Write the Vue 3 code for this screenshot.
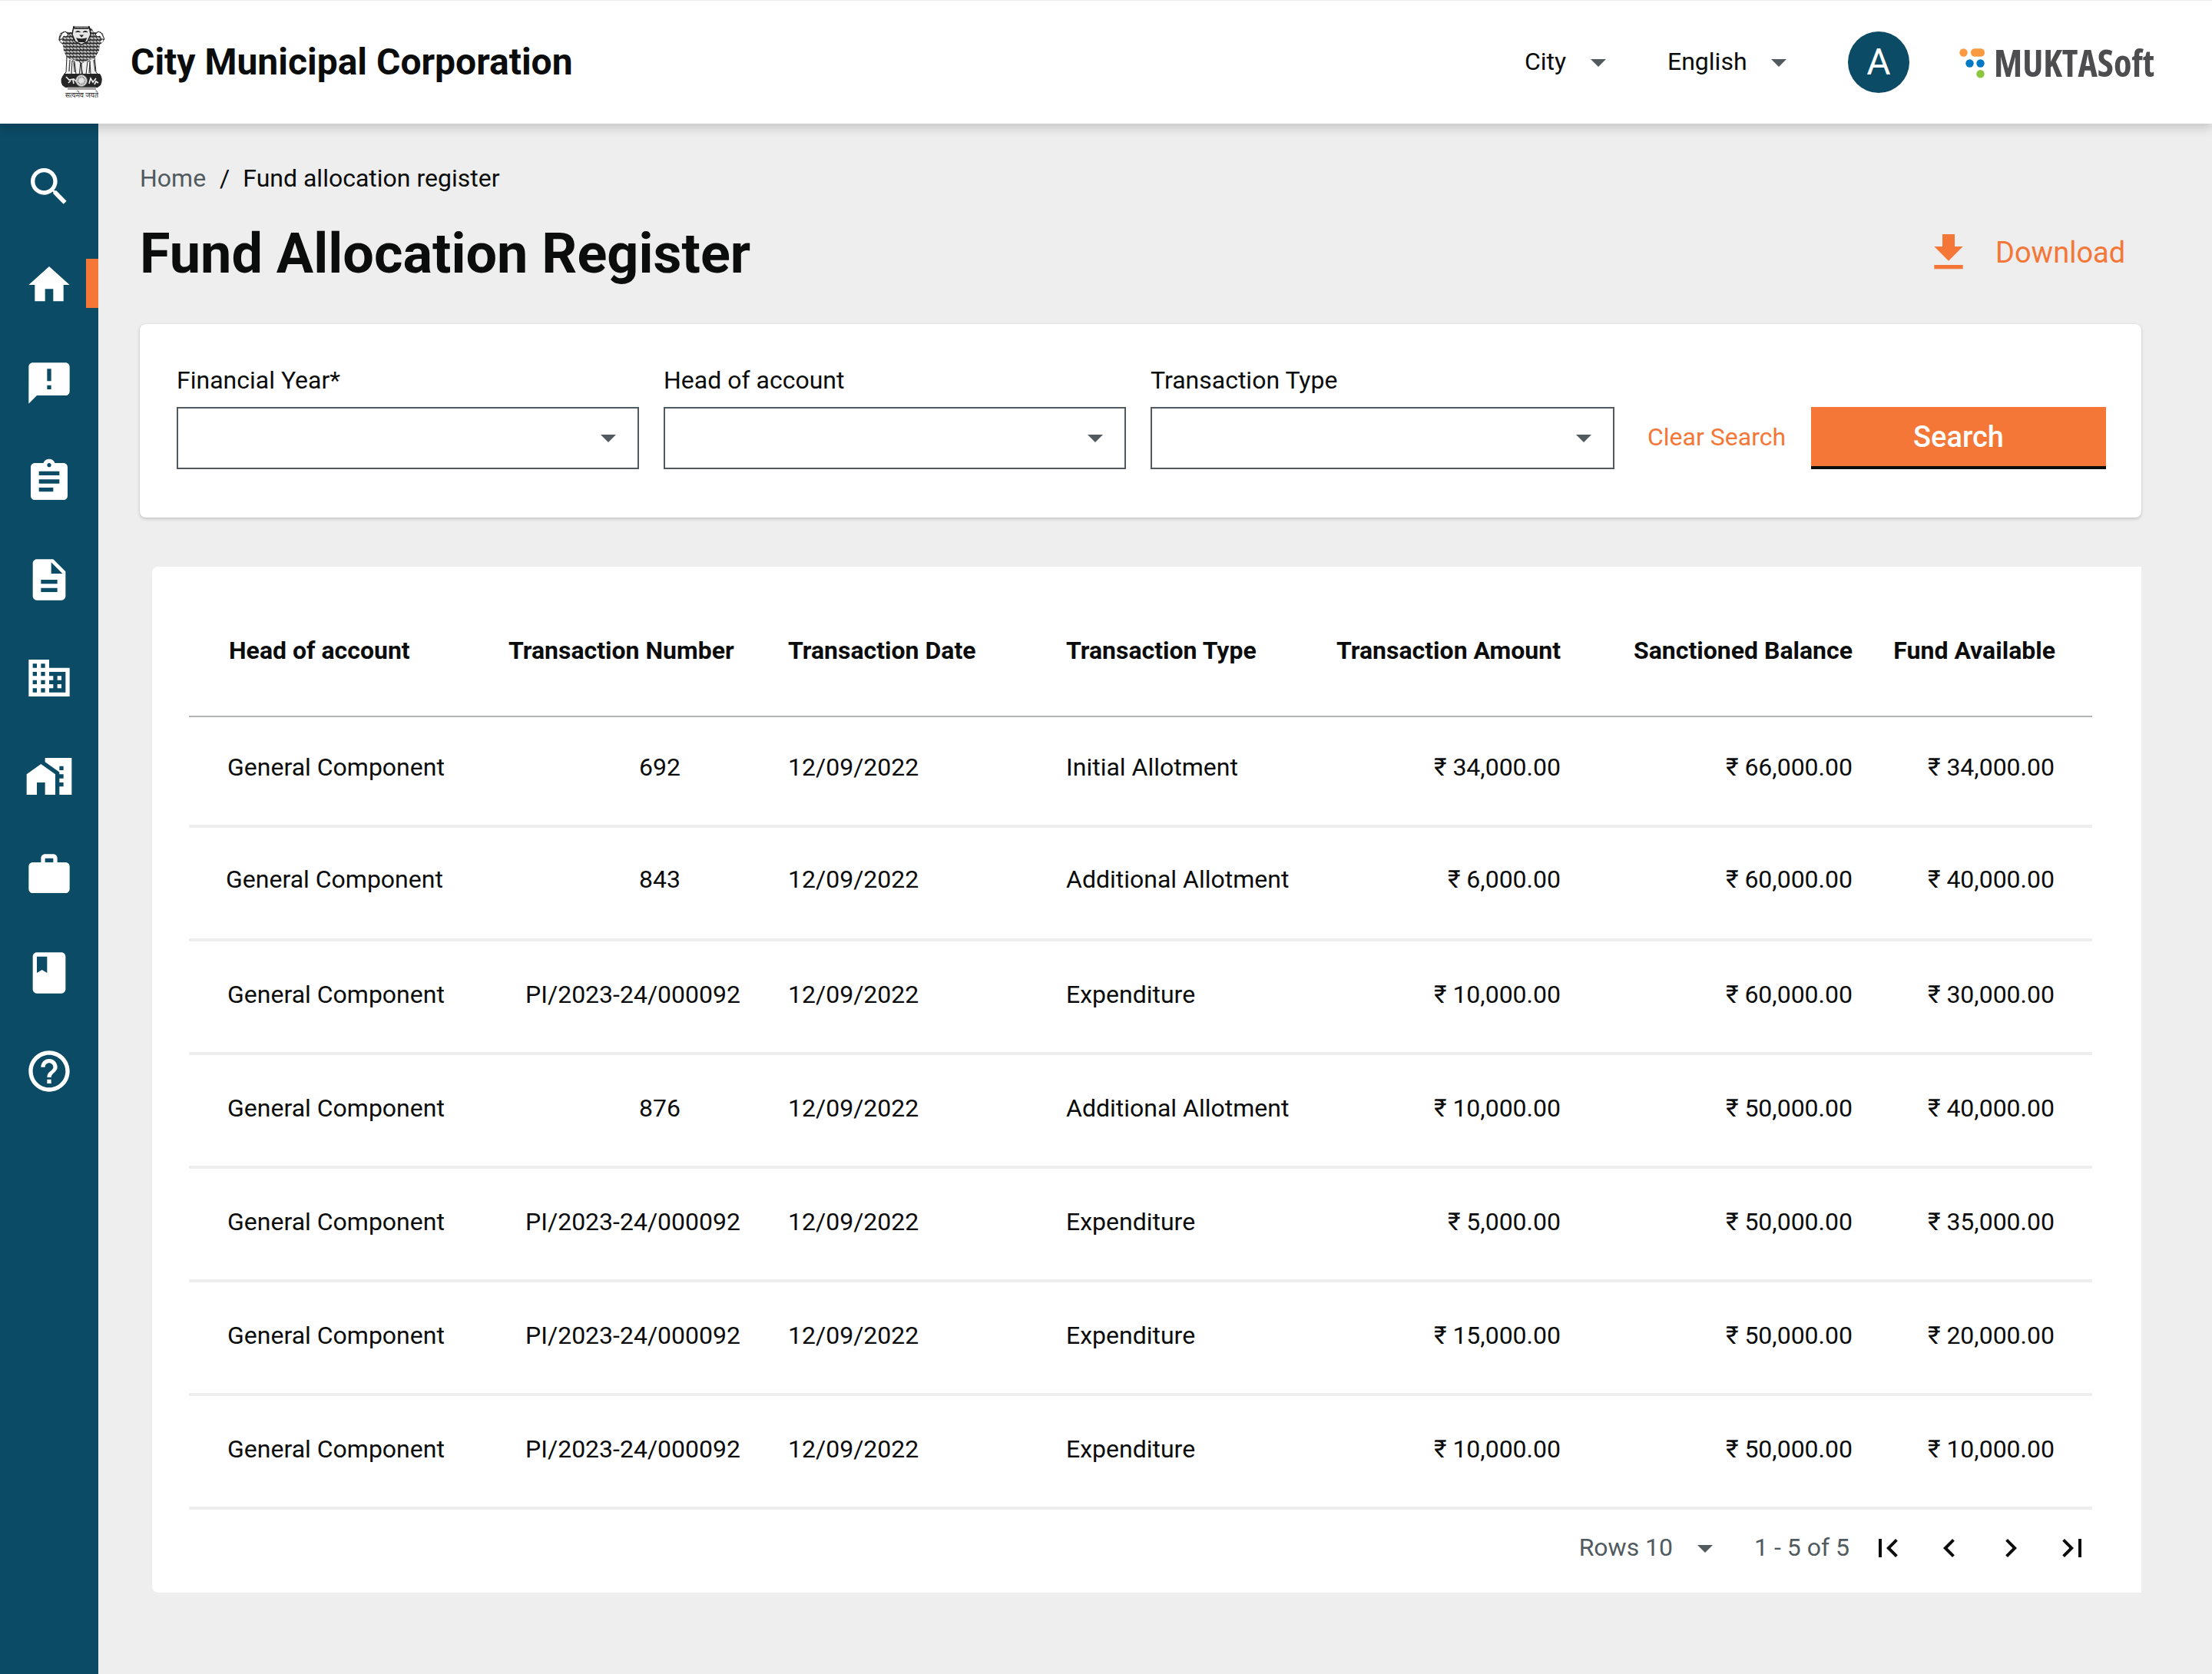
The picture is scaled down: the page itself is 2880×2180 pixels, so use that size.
<script setup>
const navItems = [
  { name: 'search', d: 'M15.5 14h-.79l-.28-.27C15.41 12.59 16 11.11 16 9.5 16 5.91 13.09 3 9.5 3S3 5.91 3 9.5 5.91 16 9.5 16c1.61 0 3.09-.59 4.23-1.57l.27.28v.79l5 4.99L20.49 19l-4.99-5zm-6 0C7.01 14 5 11.99 5 9.5S7.01 5 9.5 5 14 7.01 14 9.5 11.99 14 9.5 14z' },
  { name: 'home', active: true, d: 'M10 20v-6h4v6h5v-8h3L12 3 2 12h3v8z' },
  { name: 'complaints', d: 'M20 2H4c-1.1 0-1.99.9-1.99 2L2 22l4-4h14c1.1 0 2-.9 2-2V4c0-1.100-.9-2-2-2zm-7 13h-2v-2h2v2zm0-4h-2V5h2v6z' },
  { name: 'assignment', d: 'M19 3h-4.180C14.4 1.840 13.3 1 12 1c-1.3 0-2.4.84-2.820 2H5c-1.1 0-2 .9-2 2v14c0 1.1.9 2 2 2h14c1.1 0 2-.9 2-2V5c0-1.1-.9-2-2-2zm-7 0c.55 0 1 .45 1 1s-.45 1-1 1-1-.45-1-1 .45-1 1-1zm2 14H7v-2h7v2zm3-4H7v-2h10v2zm0-4H7V7h10v2z' },
  { name: 'document', d: 'M14 2H6c-1.100 0-1.990.9-1.990 2L4 20c0 1.1.89 2 1.990 2H18c1.100 0 2-.9 2-2V8l-6-6zm2 16H8v-2h8v2zm0-4H8v-2h8v2zm-3-5V3.500L18.500 9H13z' },
  { name: 'organisation', d: 'M12 7V3H2v18h20V7H12zM6 19H4v-2h2v2zm0-4H4v-2h2v2zm0-4H4V9h2v2zm0-4H4V5h2v2zm4 12H8v-2h2v2zm0-4H8v-2h2v2zm0-4H8V9h2v2zm0-4H8V5h2v2zm10 12h-8v-2h2v-2h-2v-2h2v-2h-2V9h8v10zm-2-8h-2v2h2v-2zm0 4h-2v2h2v-2z' },
  { name: 'property', d: 'M1 11v10h5v-6h4v6h5V11L8 6z M10 3v1.970l7 5V11h2v2h-2v2h2v2h-2v4h6V3H10zm9 6h-2V7h2v2z' },
  { name: 'works', d: 'M20 6h-4V4c0-1.110-.89-2-2-2h-4c-1.110 0-2 .89-2 2v2H4c-1.110 0-1.990.89-1.990 2L2 19c0 1.110.89 2 2 2h16c1.110 0 2-.89 2-2V8c0-1.110-.89-2-2-2zm-6 0h-4V4h4v2z' },
  { name: 'register', d: 'M18 2H6c-1.100 0-2 .9-2 2v16c0 1.100.9 2 2 2h12c1.100 0 2-.9 2-2V4c0-1.100-.9-2-2-2zM6 4h5v8l-2.500-1.500L6 12V4z' },
  { name: 'help', d: 'M11 18h2v-2h-2v2zm1-16C6.480 2 2 6.480 2 12s4.480 10 10 10 10-4.480 10-10S17.520 2 12 2zm0 18c-4.410 0-8-3.590-8-8s3.590-8 8-8 8 3.590 8 8-3.590 8-8 8zm0-14c-2.210 0-4 1.790-4 4h2c0-1.100.9-2 2-2s2 .9 2 2c0 2-3 1.750-3 5h2c0-2.250 3-2.500 3-5 0-2.210-1.790-4-4-4z' },
]

const filters = ['Financial Year*', 'Head of account', 'Transaction Type']

const columns = ['Head of account', 'Transaction Number', 'Transaction Date', 'Transaction Type', 'Transaction Amount', 'Sanctioned Balance', 'Fund Available']

const rows = [
  { no: '692', type: 'Initial Allotment', amount: '34,000.00', balance: '66,000.00', fund: '34,000.00' },
  { no: '843', type: 'Additional Allotment', amount: '6,000.00', balance: '60,000.00', fund: '40,000.00' },
  { no: 'PI/2023-24/000092', type: 'Expenditure', amount: '10,000.00', balance: '60,000.00', fund: '30,000.00' },
  { no: '876', type: 'Additional Allotment', amount: '10,000.00', balance: '50,000.00', fund: '40,000.00' },
  { no: 'PI/2023-24/000092', type: 'Expenditure', amount: '5,000.00', balance: '50,000.00', fund: '35,000.00' },
  { no: 'PI/2023-24/000092', type: 'Expenditure', amount: '15,000.00', balance: '50,000.00', fund: '20,000.00' },
  { no: 'PI/2023-24/000092', type: 'Expenditure', amount: '10,000.00', balance: '50,000.00', fund: '10,000.00' },
]

const pagers = [
  'M18.410 16.590L13.820 12l4.590-4.590L17 6l-6 6 6 6zM6 6h2v12H6z',
  'M15.410 7.410L14 6l-6 6 6 6 1.410-1.410L10.830 12z',
  'M10 6L8.590 7.410 13.170 12l-4.580 4.590L10 18l6-6z',
  'M5.590 7.410L10.180 12l-4.590 4.590L7 18l6-6-6-6zM16 6h2v12h-2z',
]
</script>

<template>
  <div class="page">
    <header class="topbar">
      <svg class="emblem" viewBox="0 0 90 120">
        <defs>
          <pattern id="fur" width="4.400" height="4.400" patternUnits="userSpaceOnUse">
            <rect width="4.400" height="4.400" fill="#1c1c1c" />
            <path d="M0 1l1.400 1.700L2.800 1M2.200 4l1-1.600L4.400 4" stroke="#f4f4f4" stroke-width=".95" fill="none" />
          </pattern>
        </defs>
        <path d="M27 52l-1 21-3 3h10l1-18 3 1 2 17h-4v2h8l2-18 3 18h8v-2h-4l2-17 3-1 1 18h10l-3-3-2-21z" fill="#efefef" stroke="#222" stroke-width="1" />
        <path d="M31 57l-1 15M36 60l1 13M57 60l-1 14M62 57l2 15M46 60v15" stroke="#444" stroke-width="1.300" />
        <path d="M22 20l-4 3-2 7 2 4 4 3 1 8 3 7 4 4 7 1 9 5 9-5 6-1 4-4 4-7 1-8 4-3 2-4-2-7-4-3-8 1-3-6H36l-3 6z" fill="url(#fur)" />
        <path d="M17 30l4-8 4-2 4 4-3 3-3-1-2 4zM76 30l-4-8-4-2-4 4 3 3 3-1 2 4z" fill="#fff" stroke="#222" stroke-width="1" />
        <path d="M19 31l3 3M74 31l-3 3" stroke="#fff" stroke-width="1.800" />
        <path d="M36 13l1 3h18l1-3 2 11-4 9-8 4-8-4-4-9z" fill="#e6e6e6" stroke="#181818" stroke-width="1.300" />
        <path d="M37 14h18M38.500 21q3-3 6 0M48 21q3-3 6 0M44.500 25h3.500l-1.700 2zM40 29l6 1 6.500-1-2 4.500h-8z" fill="#222" stroke="#222" stroke-width="1.100" />
        <path d="M24 75h46q5 6 1 15l-4 3H25l-4-3q-4-9 3-15z" fill="#262626" />
        <circle cx="46" cy="84" r="7.500" fill="#e2e2e2" stroke="#777" />
        <circle cx="46" cy="84" r="4.700" fill="none" stroke="#666" stroke-width="2" stroke-dasharray=".8 .8" />
        <path d="M26 79l4 4 6-1 3 3M29 87l3-3M36 88l-1-5M56 88l2-7 3 5 4-5M63 89l2-4 3 2" fill="none" stroke="#eee" stroke-width="1.700" />
        <path d="M28 92.500h37v3.500H28z" fill="#aaa6a6" />
        <text x="25" y="106" textLength="43" lengthAdjust="spacingAndGlyphs" class="motto">सत्यमेव जयते</text>
      </svg>
      <div class="brand">City Municipal Corporation</div>
      <div class="pick city"><span>City</span><svg class="caret" viewBox="0 0 24 24"><path d="M7 10l5 5 5-5z" /></svg></div>
      <div class="pick lang"><span>English</span><svg class="caret" viewBox="0 0 24 24"><path d="M7 10l5 5 5-5z" /></svg></div>
      <div class="avatar">A</div>
      <svg class="logo" viewBox="0 -10 300 70">
        <g fill="#f99a41"><circle cx="5.500" cy="7.500" r="5.200" /><rect x="15" y="2.300" width="18" height="10.400" rx="5" /></g>
        <g fill="#0079c5"><circle cx="13.500" cy="21.500" r="5.200" /><circle cx="27.500" cy="21.500" r="5.200" /></g>
        <circle cx="27.500" cy="35.300" r="5.200" fill="#8cc63e" />
        <text x="45" y="38.500" textLength="209" lengthAdjust="spacingAndGlyphs">MUKTASoft</text>
      </svg>
    </header>

    <div class="body">
      <nav class="sidebar">
        <a v-for="item in navItems" :key="item.name" class="nav-item" :class="{ active: item.active }">
          <svg viewBox="0 0 24 24"><path :d="item.d" fill-rule="evenodd" /></svg>
        </a>
      </nav>

      <main class="content">
        <div class="crumbs"><span class="muted">Home</span><span class="slash">/</span><span>Fund allocation register</span></div>
        <div class="heading">
          <h1>Fund Allocation Register</h1>
          <a class="download">
            <svg viewBox="0 0 24 24"><path d="M19 9h-4V3H9v6H5l7 7 7-7zM5 18v2h14v-2H5z" /></svg>
            <span>Download</span>
          </a>
        </div>

        <section class="filters">
          <div v-for="label in filters" :key="label" class="field">
            <label>{{ label }}</label>
            <div class="select"><svg class="caret" viewBox="0 0 24 24"><path d="M7 10l5 5 5-5z" /></svg></div>
          </div>
          <a class="clear">Clear Search</a>
          <button class="submit">Search</button>
        </section>

        <section class="register">
          <div class="row head">
            <span v-for="c in columns" :key="c">{{ c }}</span>
          </div>
          <div v-for="(r, i) in rows" :key="i" class="row">
            <span>General Component</span>
            <span :class="{ short: r.no.length < 4 }">{{ r.no }}</span>
            <span>12/09/2022</span>
            <span>{{ r.type }}</span>
            <span>₹ {{ r.amount }}</span>
            <span>₹ {{ r.balance }}</span>
            <span>₹ {{ r.fund }}</span>
          </div>
          <div class="pagination">
            <span class="rows-count">Rows 10</span>
            <svg class="caret" viewBox="0 0 24 24"><path d="M7 10l5 5 5-5z" /></svg>
            <span class="range">1 - 5 of 5</span>
            <svg v-for="p in pagers" :key="p" class="pager" viewBox="0 0 24 24"><path :d="p" /></svg>
          </div>
        </section>
      </main>
    </div>
  </div>
</template>

<style>
body { margin: 0; background: #eeeeee; }
</style>

<style scoped>
* { box-sizing: border-box; }
.page {
  width: 2880px;
  height: 2180px;
  overflow: hidden;
  display: flex;
  flex-direction: column;
  background: #eeeeee;
  color: #0b0c0c;
  font: 400 32px/40px Roboto, sans-serif;
}
svg { display: block; flex: none; }
.caret { width: 48px; height: 48px; fill: #505a5f; }

.topbar {
  position: relative;
  z-index: 1;
  flex: none;
  height: 161px;
  display: flex;
  align-items: center;
  background: #fff;
  border-top: 1px solid #eee;
  box-shadow: 0 6px 12px rgba(0, 0, 0, 0.16);
}
.topbar > * { flex: none; }
.emblem { width: 90px; height: 120px; margin-left: 60px; }
.motto { font: 9px "Noto Sans Devanagari", "Noto Sans", sans-serif; fill: #222; }
.brand { margin-left: 20px; width: 1815px; font-size: 48px; line-height: 56px; font-weight: 700; white-space: nowrap; }
.pick { display: flex; align-items: center; justify-content: space-between; }
.pick span { padding-bottom: 2px; }
.city { width: 120px; }
.lang { margin-left: 66px; width: 169px; }
.avatar {
  margin-left: 66px;
  width: 80px;
  height: 80px;
  border-radius: 50%;
  background: #0b4b66;
  color: #fff;
  font-size: 48px;
  line-height: 80px;
  text-align: center;
}
.logo { width: 300px; height: 70px; margin-left: 65px; margin-top: 10px; overflow: visible; }
.logo text { font: 700 49px "Open Sans", sans-serif; font-stretch: 75%; fill: #4d4d4f; }

.body { flex: 1; display: flex; min-height: 0; }
.sidebar {
  width: 128px;
  flex: none;
  display: flex;
  flex-direction: column;
  gap: 64px;
  padding-top: 50px;
  background: #0b4b66;
}
.nav-item { position: relative; height: 64px; padding-left: 32px; }
.nav-item svg { width: 64px; height: 64px; fill: #fff; }
.nav-item.active::after {
  content: "";
  position: absolute;
  right: 0;
  top: -2px;
  width: 16px;
  height: 64px;
  background: #f47738;
}

.content { flex: 1; padding: 51px 92px 0 54px; }
.crumbs { display: flex; }
.muted { color: #505a5f; }
.slash { margin: 0 17px 0 18px; }
.heading { display: flex; justify-content: space-between; align-items: center; height: 80px; margin-top: 37px; }
h1 { margin: 0; padding-top: 3px; font-size: 72px; line-height: 80px; font-weight: 700; }
.download { display: flex; align-items: center; width: 283px; gap: 29px; color: #f47738; font-size: 38px; }
.download svg { width: 64px; height: 64px; fill: #f47738; }

.filters {
  height: 252px;
  margin-top: 53px;
  padding: 53px 46px 0 48px;
  display: flex;
  background: #fff;
  border-radius: 8px;
  box-shadow: 0 2px 4px rgba(0, 0, 0, 0.16), 0 0 2px rgba(0, 0, 0, 0.08);
}
.field { width: 602px; margin-right: 32px; }
.field:nth-child(3) { width: 604px; margin-right: 43px; }
.field label { display: block; }
.select {
  margin-top: 15px;
  height: 81px;
  padding: 0 14px 1px 0;
  border: 2px solid #505a5f;
  display: flex;
  align-items: center;
  justify-content: flex-end;
}
.clear { width: 213px; padding-top: 74px; color: #f47738; white-space: nowrap; }
.submit {
  margin: 55px 0 0;
  padding: 1px 0 0;
  width: 384px;
  height: 81px;
  border: 0;
  border-bottom: 4px solid #0b0c0c;
  background: #f47738;
  color: #fff;
  font: 500 38px/76px Roboto, sans-serif;
}

.register {
  margin: 64px 0 0 16px;
  height: 1336px;
  padding: 0 64px 0 48px;
  background: #fff;
  border-radius: 8px 0 0 8px;
}
.row {
  display: grid;
  grid-template-columns: 366px 364px 362px 319px 325px 380px 263px;
  align-items: center;
  height: 148px;
  padding: 0 0 6px 50px;
  width: 2478px;
  border-bottom: 4px solid #eeeeee;
  white-space: nowrap;
}
.row.head { height: 196px; padding: 24px 0 0 50px; border-bottom: 2px solid #b1b4b6; font-weight: 700; }
.row.head > :first-child { margin-left: 2px; }
.row.head > :last-child { margin-right: -1px; }
.row.head + .row { height: 144px; padding-bottom: 10px; }
.row.head + .row + .row { padding-bottom: 10px; }
.row:nth-child(3) > :first-child { margin-left: -2px; }
.row > :nth-child(n + 5) { text-align: right; }
.row > :nth-child(2) { width: 302px; text-align: right; }
.row > .short { width: 224px; }
.row.head > :nth-child(2) { text-align: left; }

.pagination { height: 100px; display: flex; align-items: center; justify-content: flex-end; padding-right: 2px; color: #505a5f; }
.pagination span { padding-bottom: 2px; }
.range { margin: 0 26px 0 40px; }
.rows-count { margin-right: 18px; }
.pager { width: 48px; height: 48px; fill: #0b0c0c; margin-left: 32px; }
.range + .pager { margin-left: 0; }
</style>
